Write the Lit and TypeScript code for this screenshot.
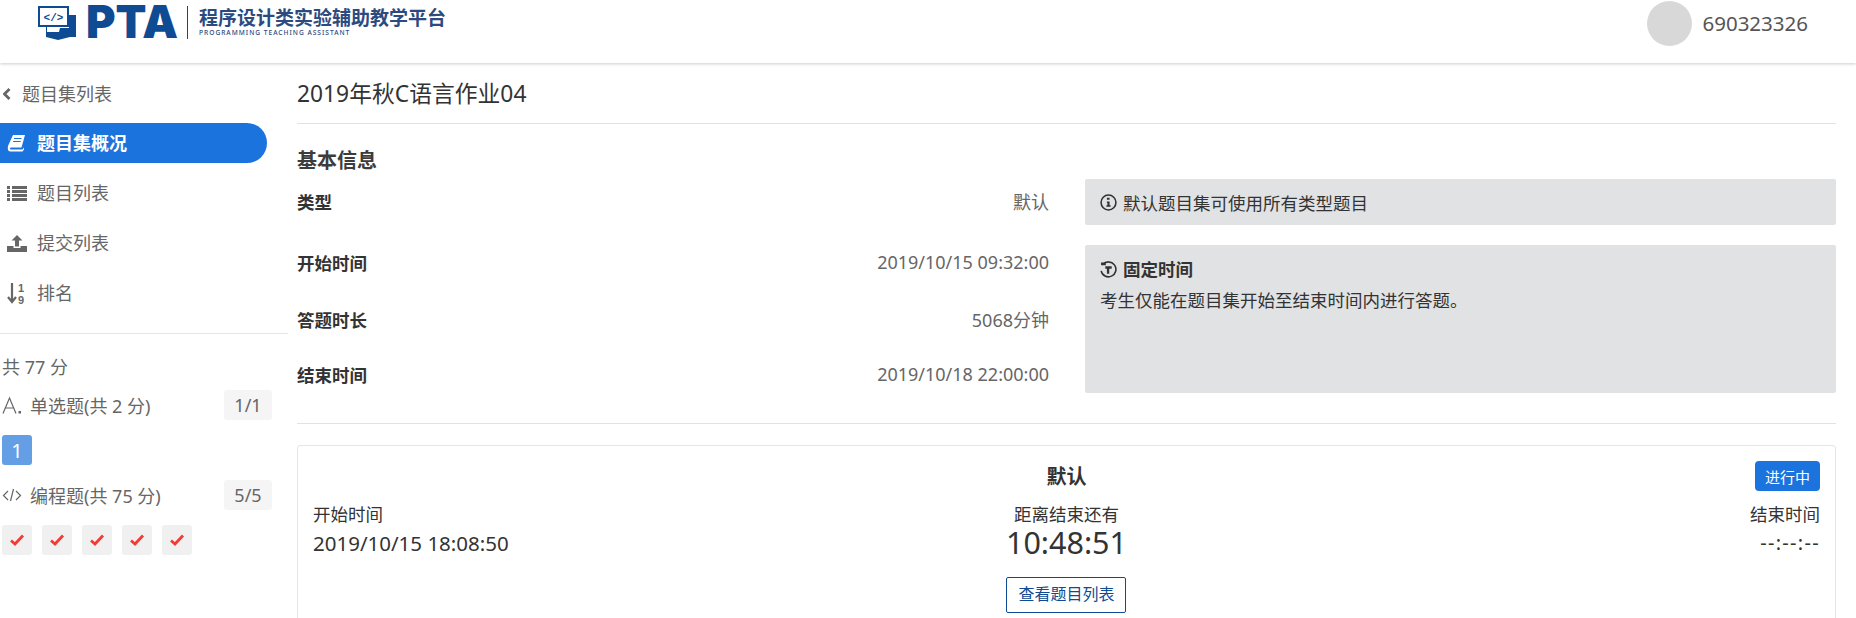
import { LitElement, html, css, svg } from "lit";
import { customElement } from "lit/decorators.js";

const check = svg`<svg width="16" height="14" viewBox="0 0 16 14"><path d="M2 7.500 L6 11 L14 2.500" fill="none" stroke="#f33a33" stroke-width="2.800"/></svg>`;

@customElement("app-root")
export class AppRoot extends LitElement {
  static styles = css`
    :host { display: block; height: 618px; overflow: hidden; background: #fff; color: #3c3c3c;
      font-family: "Noto Sans", "Noto Sans CJK SC", sans-serif; font-size: 18px; }
    * { box-sizing: border-box; }
    .top { height: 63px; display: flex; align-items: flex-start; justify-content: space-between; box-shadow: 0 1px 3px rgba(0,0,0,.2); padding: 0 48px 0 38px; }
    .logo { display: flex; align-items: flex-start; padding-top: 6px; color: #0f4b92; }
    .pta { font: 900 45px/44px "Inter", sans-serif; margin: -6px 0 0 9px; white-space: nowrap; }
    .sep { width: 1px; height: 33px; background: #0f4b92; margin: 0 11px 0 9px; }
    .lt { display: flex; flex-direction: column; color: #2d4a80; }
    .cn { font: 700 19px/22px "Noto Sans CJK SC", sans-serif; white-space: nowrap; }
    .en { font: 500 6.6px/9px "Noto Sans", sans-serif; letter-spacing: 1px; white-space: nowrap; }
    .user { display: flex; align-items: center; gap: 10px; color: #555; font-size: 20.500px; height: 47px; padding-bottom: 1px; }
    .avatar { width: 45px; height: 45px; border-radius: 50%; background: #d8d8d8; }
    .body { display: flex; }
    .side { width: 288px; flex: none; color: #666; }
    .back { display: flex; align-items: center; height: 36px; margin-top: 13px; padding-left: 3px; gap: 11px; }
    .back span, .item span { margin-top: -2px; }
    .nav { display: flex; flex-direction: column; gap: 10px; margin-top: 11px; padding-bottom: 20px; border-bottom: 1px solid #e5e5e5; }
    .item { display: flex; align-items: center; height: 40px; width: 267px; padding-left: 7px; gap: 10px; border-radius: 0 20px 20px 0; }
    .item svg { width: 20px; flex: none; }
    .item.on { background: #1b74de; color: #fff; font-weight: 700; }
    .score { padding: 18px 0 0 2px; }
    .total { line-height: 30px; }
    .sec { display: flex; align-items: center; justify-content: space-between; width: 270px; height: 30px; }
    .total + .sec { margin-top: 8px; }
    .sec .l { display: flex; align-items: center; gap: 8px; }
    .ic { width: 20px; display: flex; }
    .cnt { width: 48px; height: 30px; background: #f5f5f5; border-radius: 3px; display: flex; align-items: center; justify-content: center; }
    .cells { display: flex; gap: 10px; margin: 15px 0; }
    .cell { width: 30px; height: 30px; border-radius: 3px; background: #f0f0f0; display: flex; align-items: center; justify-content: center; }
    .cell.q { background: #649ee4; color: #fff; font-size: 20px; }
    .main { flex: 1; padding: 0 20px 0 9px; min-width: 0; }
    .title { height: 61px; border-bottom: 1px solid #e2e2e2; font-size: 22.800px; line-height: 36px; padding-top: 13px; color: #333; }
    h3 { margin: 23px 0 0; font-size: 20px; line-height: 28px; font-weight: 700; }
    .grid { display: grid; grid-template-columns: 752px 1fr; column-gap: 36px; row-gap: 20px; margin-top: 4px; }
    .row { display: flex; justify-content: space-between; align-items: center; color: #666; }
    .first { padding-bottom: 2px; }
    .row b { color: #333; font-weight: 700; font-size: 17.500px; }
    .rows { display: grid; grid-template-rows: 57px 55px 33px; align-items: start; padding-top: 2px; height: 148px; }
    .rows .row { height: 30px; }
    .note { background: #e1e2e4; border-radius: 2px; padding: 0 15px; color: #333; font-size: 17.500px; }
    .note .h { display: flex; align-items: center; gap: 6px; }
    .n1 { height: 46px; display: flex; align-items: center; gap: 6px; }
    .n2 { height: 148px; padding-top: 9px; line-height: 31px; }
    .hr { height: 1px; background: #e2e2e2; margin-top: 30px; }
    .card { margin-top: 21px; height: 200px; border: 1px solid #e5e5e5; border-radius: 3px; padding: 0 15px; display: grid; grid-template-columns: 1fr 1fr 1fr; color: #333; position: relative; }
    .cardtitle { position: absolute; left: 0; right: 0; top: 15px; text-align: center; font-weight: 700; font-size: 20px; line-height: 32px; }
    .badge { position: absolute; right: 15px; top: 15px; width: 65px; height: 30px; background: #1b74de; color: #fff; font-size: 15px; border-radius: 4px; display: flex; align-items: center; justify-content: center; }
    .col { padding-top: 54px; line-height: 28px; font-size: 17.500px; }
    .date { font-size: 20.500px; padding-top: 1px; }
    .mid { text-align: center; }
    .r { text-align: right; }
    .dash { font-size: 20px; letter-spacing: 1.300px; padding-top: 1px; }
    .clock { font-size: 30.500px; line-height: 30px; margin-top: -1px; }
    .btn { display: inline-block; margin-top: 20px; width: 120px; height: 36px; border: 1px solid #0f4b92; border-radius: 2px; color: #0f4b92; font-size: 16px; line-height: 33px; }
  `;

  render() {
    return html`
      <div class="top">
        <div class="logo">
          <svg width="39" height="35" viewBox="0 0 39 35">
            <path d="M9 13h-1v19l12 3 12-3h6V10h-7v13h-9l-1 4H9z" fill="#0f4b92" transform="translate(0,-1)"/>
            <rect x="1" y="1" width="29" height="19" fill="#fff" stroke="#0f4b92" stroke-width="2"/>
            <text x="15.500" y="15" text-anchor="middle" font-family="Liberation Mono" font-weight="700" font-size="11" fill="#0f4b92">&lt;/&gt;</text>
          </svg>
          <div class="pta">PTA</div>
          <div class="sep"></div>
          <div class="lt"><div class="cn">程序设计类实验辅助教学平台</div><div class="en">PROGRAMMING TEACHING ASSISTANT</div></div>
        </div>
        <div class="user"><div class="avatar"></div><span>690323326</span></div>
      </div>
      <div class="body">
        <div class="side">
          <div class="back">
            <svg width="8" height="12" viewBox="0 0 8 12"><path d="M6.500 1 1.500 6l5 5" fill="none" stroke="#666" stroke-width="2.800"/></svg>
            <span>题目集列表</span>
          </div>
          <div class="nav">
            <div class="item on">
              <svg height="18" viewBox="0 0 20 18"><path d="M6 1h12l-3.500 12.500H4C2.800 13.500 2.500 15.500 4 15.500h11.500l1.500-2v2l-1.500 2H3.500C0.500 17.500 0.500 14 1.200 11.500z" fill="#fff"/><path d="M7 4.500h7.500M6.200 7.500h7.500" stroke="#1b74de" stroke-width="1.200"/></svg>
              <span>题目集概况</span>
            </div>
            <div class="item">
              <svg height="15" viewBox="0 0 20 15" fill="#666"><path d="M0 0h3v3H0zM5 0h15v3H5zM0 4h3v3H0zM5 4h15v3H5zM0 8h3v3H0zM5 8h15v3H5zM0 12h3v3H0zM5 12h15v3H5z"/></svg>
              <span>题目列表</span>
            </div>
            <div class="item">
              <svg height="17" viewBox="0 0 20 17" fill="#666"><path d="M10 0l5.500 5.500H12v6H8v-6H4.500zM0 11h6.500v2h7v-2H20v6H0z"/></svg>
              <span>提交列表</span>
            </div>
            <div class="item">
              <svg height="21" viewBox="0 0 20 21"><path d="M5 0v18M1 14 5 19l4-5" fill="none" stroke="#666" stroke-width="2.200"/><text x="11" y="9" font-size="11" font-weight="700" fill="#666" font-family="Liberation Sans">1</text><text x="11" y="20.500" font-size="11" font-weight="700" fill="#666" font-family="Liberation Sans">9</text></svg>
              <span>排名</span>
            </div>
          </div>
          <div class="score">
            <div class="total">共 77 分</div>
            <div class="sec">
              <div class="l"><span class="ic"><svg width="20" height="20" viewBox="0 0 20 20"><path d="M1 18.500 7.500 3 14 18.500M3.500 13h8" fill="none" stroke="#666" stroke-width="1.200"/><rect x="16.500" y="16" width="2.500" height="2.500" fill="#666"/></svg></span><span>单选题(共 2 分)</span></div>
              <div class="cnt">1/1</div>
            </div>
            <div class="cells"><div class="cell q">1</div></div>
            <div class="sec">
              <div class="l"><span class="ic"><svg width="20" height="14" viewBox="0 0 20 14"><path d="M6 3 1.500 7.500 6 12M14 3l4.500 4.500L14 12M11.500 1 8.500 13" fill="none" stroke="#666" stroke-width="1.200"/></svg></span><span>编程题(共 75 分)</span></div>
              <div class="cnt">5/5</div>
            </div>
            <div class="cells">${[1, 2, 3, 4, 5].map(() => html`<div class="cell">${check}</div>`)}</div>
          </div>
        </div>
        <div class="main">
          <div class="title">2019年秋C语言作业04</div>
          <h3>基本信息</h3>
          <div class="grid">
            <div class="row first"><b>类型</b><span>默认</span></div>
            <div class="note n1">
              <svg width="17" height="17" viewBox="0 0 16 16"><circle cx="8" cy="8" r="7" fill="none" stroke="#333" stroke-width="1.500"/><path d="M6.500 3.500h2.500v2H6.500zM6.500 7H9v3.500h1V12H6v-1.500h1V8.500h-.5z" fill="#333"/></svg>
              <span>默认题目集可使用所有类型题目</span>
            </div>
            <div class="rows">
              <div class="row"><b>开始时间</b><span>2019/10/15 09:32:00</span></div>
              <div class="row"><b>答题时长</b><span>5068分钟</span></div>
              <div class="row"><b>结束时间</b><span>2019/10/18 22:00:00</span></div>
            </div>
            <div class="note n2">
              <div class="h">
                <svg width="17" height="17" viewBox="0 0 16 16"><path d="M3.500 2.500A7 7 0 1 1 1 8" fill="none" stroke="#333" stroke-width="1.500" transform="rotate(-10 8 8)"/><path d="M1 1.500h4.500V4H1zM5 5h6v2.200H8.700V12H6.500V7.200H5z" fill="#333"/></svg>
                <b>固定时间</b>
              </div>
              <div>考生仅能在题目集开始至结束时间内进行答题。</div>
            </div>
          </div>
          <div class="hr"></div>
          <div class="card">
            <div class="cardtitle">默认</div>
            <div class="badge">进行中</div>
            <div class="col"><div>开始时间</div><div class="date">2019/10/15 18:08:50</div></div>
            <div class="col mid"><div>距离结束还有</div><div class="clock">10:48:51</div><div class="btn">查看题目列表</div></div>
            <div class="col r"><div>结束时间</div><div class="dash">--:--:--</div></div>
          </div>
        </div>
      </div>
    `;
  }
}
